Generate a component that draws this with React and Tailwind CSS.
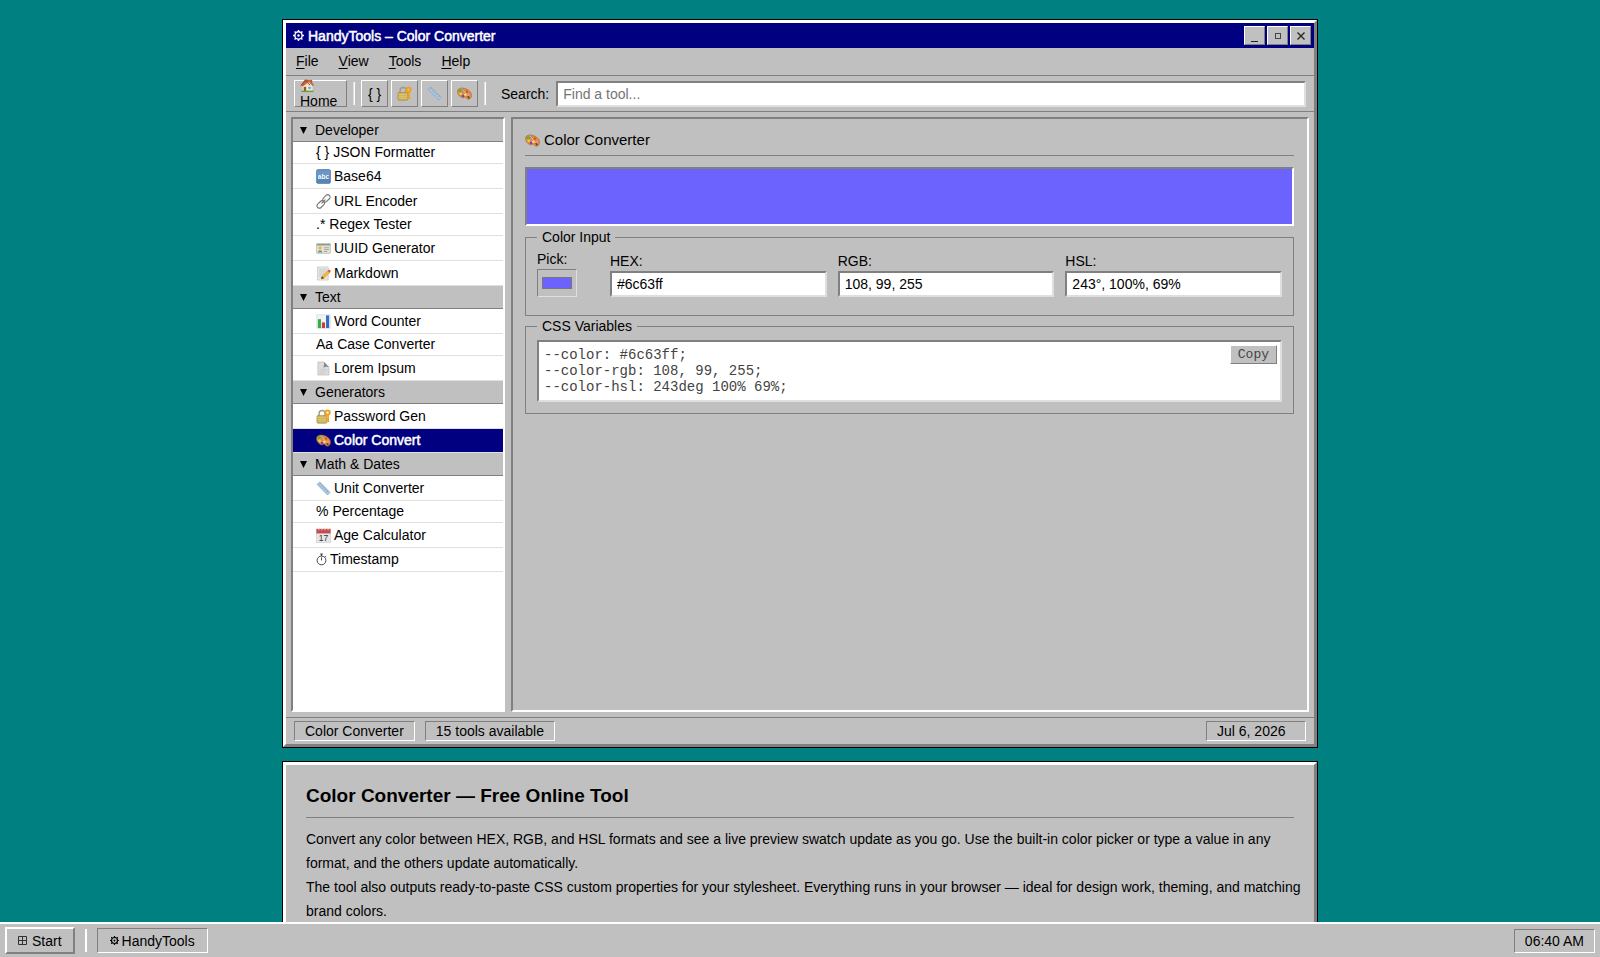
import { useState } from "react";

const Palette = ({ className = "h-[15px] w-[15px]" }) => (
    <svg viewBox="0 0 16 16" className={`shrink-0 ${className}`} aria-hidden="true">
        <path d="M.6 4.800C1.200 2.200 5 1.500 8.200 2.500c3.800 1.200 7.600 4 7.300 7.600-.2 2.400-1.700 4.200-3.700 4.100-1.600-.1-1.400-1.900-2.800-2.200-1.200-.3-1.700 1-3.200.6C2.800 11.800-.1 8.400.6 4.800z" fill="#dc8e3f" stroke="#9a5a24" strokeWidth=".5" />
        <ellipse cx="8.800" cy="9.400" rx="1.300" ry="1" fill="#f3e8da" />
        <circle cx="3.200" cy="5" r="1.400" fill="#3fb34f" />
        <circle cx="6.500" cy="4.300" r="1.300" fill="#3c8ee8" />
        <circle cx="3.900" cy="8.200" r="1.400" fill="#f5d130" />
        <circle cx="6.500" cy="10.700" r="1.300" fill="#7b3fc4" />
        <circle cx="10.500" cy="6" r="1.200" fill="#e33c3c" />
        <circle cx="12.700" cy="9.200" r="1.300" fill="#f08bb0" />
        <path d="M5.500 3 12 11.500" stroke="#f2c94c" strokeWidth="1" />
        <path d="m11.500 10.800 1.700 2.400" stroke="#6b3f1d" strokeWidth="1.500" />
    </svg>
);

const House = () => (
    <svg viewBox="0 0 16 16" className="h-[15px] w-[15px] shrink-0" aria-hidden="true">
        <path d="M11 2h2v4h-2z" fill="#a5563f" />
        <path d="M2.500 8 8 3l5.500 5v6.500h-11z" fill="#f2dfbd" />
        <path d="M1 7.800 5.500 1.500 11 2l4 5.800-1.500.8L9.500 4 3 9z" fill="#c4633f" />
        <path d="M1 8 6 2l4.500 5.500" fill="none" stroke="#8e3d28" strokeWidth="1" />
        <path d="M4 9.500h2.500v5H4z" fill="#8c5a33" />
        <path d="M8.500 9h3.500v3H8.500z" fill="#5aa7d8" stroke="#fff" strokeWidth=".6" />
        <path d="M1.500 13.500h13v1.500h-13z" fill="#6d9a45" />
    </svg>
);

const Lock = () => (
    <svg viewBox="0 0 16 16" className="h-[15px] w-[15px] shrink-0" aria-hidden="true">
        <path d="M3.300 8V4.800a3.200 3.200 0 0 1 6.400 0V8" fill="none" stroke="#9a9a94" strokeWidth="1.500" />
        <rect x="1" y="6.800" width="10.500" height="8.400" rx="1.200" fill="#cbb157" stroke="#97802f" strokeWidth=".6" />
        <path d="M1.500 9h9.500M1.500 11h9.500M1.500 13h9.500" stroke="#e6d58e" strokeWidth=".6" />
        <circle cx="12.300" cy="3.800" r="2.300" fill="none" stroke="#f0a11a" strokeWidth="2.100" />
        <path d="m12.800 6 .4 8M13 10.300h-2M13 12.800h-1.600" stroke="#f0a11a" strokeWidth="1.700" />
    </svg>
);

const Ruler = () => (
    <svg viewBox="0 0 16 16" className="h-[15px] w-[15px] shrink-0" aria-hidden="true">
        <path d="M1 3.500 4 1l11 11.200L12.300 15z" fill="#a9c6e0" stroke="#7d9cba" strokeWidth=".6" />
        <path d="m5 2.500-1.200 1M7 4.500l-1.200 1M9 6.500l-1.200 1M11 8.500l-1.200 1M13 10.500l-1.200 1" stroke="#5c7894" strokeWidth=".6" />
    </svg>
);

const Abc = () => (
    <svg viewBox="0 0 16 16" className="h-[15px] w-[15px] shrink-0" aria-hidden="true">
        <rect x=".5" y=".5" width="15" height="15" rx="1.800" fill="#5685b6" stroke="#3f6c9d" strokeWidth=".6" />
        <path d="M1 1.500h14v5H1z" fill="#7ba4cd" opacity=".6" />
        <text x="8" y="10.500" textAnchor="middle" fill="#fff" fontSize="7" fontWeight="700" fontFamily="Liberation Sans, sans-serif">abc</text>
    </svg>
);

const Link = () => (
    <svg viewBox="0 0 16 16" className="h-[15px] w-[15px] shrink-0" fill="none" stroke="#777" strokeWidth="1.200" strokeLinecap="round" aria-hidden="true">
        <rect x="6.600" y="2.200" width="9" height="5" rx="2.500" transform="rotate(-45 11.100 4.700)" />
        <rect x=".5" y="8.700" width="9" height="5" rx="2.500" transform="rotate(-45 5 11.200)" />
        <path d="m6.200 9.800 3.500-3.500" />
    </svg>
);

const IdCard = () => (
    <svg viewBox="0 0 16 16" className="h-[15px] w-[15px] shrink-0" aria-hidden="true">
        <rect x=".5" y="2.800" width="15" height="10.400" rx=".8" fill="#e4e2d4" stroke="#a9a99f" strokeWidth=".6" />
        <path d="M.8 3h14.400v1.800H.8z" fill="#8f9aa0" />
        <circle cx="4.300" cy="7.400" r="1.700" fill="#f3b81f" />
        <path d="M2 12.300c0-3.300 4.600-3.300 4.600 0z" fill="#5c9bb5" />
        <path d="M8.500 7.200h5.500M8.500 9.200h5.500M8.500 11.200h3.500" stroke="#96968c" strokeWidth=".8" />
    </svg>
);

const Memo = () => (
    <svg viewBox="0 0 16 16" className="h-[15px] w-[15px] shrink-0" aria-hidden="true">
        <path d="M1.500 1h11.500v14H1.500z" fill="#e9e9e7" stroke="#b8b8b8" strokeWidth=".6" />
        <path d="M3 3.500h8M3 5.500h8M3 7.500h7M3 9.500h5M3 11.500h3" stroke="#a5b0b8" strokeWidth=".6" />
        <path d="m5.500 13.800.9-2.900 6.300-6.100 2.200 2.200-6.300 6.100z" fill="#f4b731" stroke="#c9851c" strokeWidth=".4" />
        <path d="m12.300 5.200 1.200-1.200c.9-.6 2.500.9 2 2l-1.100 1.300z" fill="#e2574c" />
        <path d="m5.500 13.800.9-2.900 2.200 2.200z" fill="#5a3a20" />
    </svg>
);

const Chart = () => (
    <svg viewBox="0 0 16 16" className="h-[15px] w-[15px] shrink-0" aria-hidden="true">
        <path d="M.8.8h14.400v14.400H.8z" fill="#f1f3f4" stroke="#cdd2d5" strokeWidth=".6" />
        <path d="M2 5.500h3.300V15H2z" fill="#2fae4a" />
        <path d="M6.300 9h3.300v6H6.300z" fill="#d8343c" />
        <path d="M10.700 1.500H14V15h-3.300z" fill="#2f6fc9" />
    </svg>
);

const Page = () => (
    <svg viewBox="0 0 16 16" className="h-[15px] w-[15px] shrink-0" aria-hidden="true">
        <path d="M2 1h6.500l5.300 5.600V15H2z" fill="#dcdcdc" stroke="#b0b0b0" strokeWidth=".6" />
        <path d="M8.500 1c.4 2.600 0 4.300-.8 5.800 2-.7 4.200-.8 6.100-.2z" fill="#858585" />
        <path d="M4 9h7.500M4 11h7.500M4 13h5.500" stroke="#c3c3c3" strokeWidth=".7" />
    </svg>
);

const Calendar = () => (
    <svg viewBox="0 0 16 16" className="h-[15px] w-[15px] shrink-0" aria-hidden="true">
        <path d="M.5 1h15v14.500H.5z" fill="#e6e6e6" stroke="#c4c4c4" strokeWidth=".6" />
        <path d="M.5 1h15v4.800H.5z" fill="#c7494b" />
        <path d="M3 .5v2M6.300.5v2M9.600.5v2M12.900.5v2" stroke="#f1d4d4" strokeWidth="1" />
        <text x="8" y="14" textAnchor="middle" fill="#333" fontSize="9" fontFamily="Liberation Sans, sans-serif">17</text>
    </svg>
);

const Stopwatch = () => (
    <svg viewBox="0 0 12 14" className="h-[13px] w-[11px] shrink-0" fill="none" stroke="#222" strokeWidth=".9" aria-hidden="true">
        <circle cx="6" cy="8" r="4.800" />
        <path d="M4.500 1h3M6 1v2.200M9.700 3.200l1.200 1.200M6 8V4.800" />
    </svg>
);

const Gear = ({ className = "h-[11px] w-[11px]" }) => (
    <svg viewBox="0 0 12 12" className={`shrink-0 ${className}`} fill="none" stroke="currentColor" aria-hidden="true">
        <circle cx="6" cy="6" r="4" strokeWidth="1.600" />
        <circle cx="6" cy="6" r="1.300" fill="currentColor" stroke="none" />
        <path d="M6 0v2M6 10v2M0 6h2M10 6h2M1.700 1.700l1.400 1.400M8.900 8.900l1.400 1.400M1.700 10.300l1.400-1.400M8.900 3.100l1.400-1.400" strokeWidth="1.600" />
    </svg>
);

const WindowsGrid = () => (
    <svg viewBox="0 0 9 9" className="h-[9px] w-[9px] shrink-0" fill="none" stroke="#333" aria-hidden="true">
        <path d="M.5.5h8v8h-8zM4.500.5v8M.5 4.500h8" />
    </svg>
);

const groups = [
    {
        title: "Developer",
        items: [
            { prefix: "{ }", label: "JSON Formatter" },
            { icon: Abc, label: "Base64" },
            { icon: Link, label: "URL Encoder" },
            { prefix: ".*", label: "Regex Tester" },
            { icon: IdCard, label: "UUID Generator" },
            { icon: Memo, label: "Markdown" },
        ],
    },
    {
        title: "Text",
        items: [
            { icon: Chart, label: "Word Counter" },
            { prefix: "Aa", label: "Case Converter" },
            { icon: Page, label: "Lorem Ipsum" },
        ],
    },
    {
        title: "Generators",
        items: [
            { icon: Lock, label: "Password Gen" },
            { icon: Palette, label: "Color Convert", active: true },
        ],
    },
    {
        title: "Math & Dates",
        items: [
            { icon: Ruler, label: "Unit Converter" },
            { prefix: "%", label: "Percentage" },
            { icon: Calendar, label: "Age Calculator" },
            { icon: Stopwatch, label: "Timestamp", short: true },
        ],
    },
];

const raised = "border border-t-white border-l-white border-r-[#808080] border-b-[#808080]";
const sunken = "border border-t-[#808080] border-l-[#808080] border-r-white border-b-white";
const frame = "border-[3px] border-t-white border-l-white border-r-[#808080] border-b-[#808080] bg-[#c0c0c0] shadow-[0_0_0_1px_#000]";
const well = "border-2 border-t-[#808080] border-l-[#808080] border-r-white border-b-white";
const field = "h-[26px] w-full border-2 border-t-[#808080] border-l-[#808080] border-r-[#dfdfdf] border-b-[#dfdfdf] bg-white px-[5px] text-sm outline-none placeholder:text-[#757575]";

const TitleBar = () => (
    <div className="flex h-[25px] items-center justify-between bg-[#000080] pr-[3px] pl-[7px] text-white">
        <div className="flex items-center gap-1 text-sm [-webkit-text-stroke:0.5px_#fff]">
            <Gear />
            <span>HandyTools – Color Converter</span>
        </div>
        <div className="flex gap-[2px] text-[#222]">
            <button type="button" aria-label="Minimize" className={`flex h-[19px] w-[21px] items-end justify-center bg-[#c0c0c0] pb-[2px] ${raised}`}>
                <span className="h-px w-[7px] bg-[#222]" />
            </button>
            <button type="button" aria-label="Maximize" className={`flex h-[19px] w-[21px] items-center justify-center bg-[#c0c0c0] ${raised}`}>
                <span className="mt-px h-[6px] w-[6px] border border-[#444]" />
            </button>
            <button type="button" aria-label="Close" className={`flex h-[19px] w-[21px] items-center justify-center bg-[#c0c0c0] ${raised}`}>
                <svg viewBox="0 0 8 8" className="h-2 w-2" stroke="currentColor" strokeWidth="1.300">
                    <path d="m.5.5 7 7M7.500.5l-7 7" />
                </svg>
            </button>
        </div>
    </div>
);

const MenuBar = () => (
    <nav className="flex h-7 items-center gap-5 border-b border-[#808080] px-[10px] pb-px">
        {["File", "View", "Tools", "Help"].map((name) => (
            <button type="button" key={name}>
                <span className="underline underline-offset-2">{name[0]}</span>
                {name.slice(1)}
            </button>
        ))}
    </nav>
);

const Separator = () => <div className="mx-[3px] h-[23px] w-[2px] shrink-0 border-r border-l border-r-white border-l-[#dfdfdf]" />;

const ToolButton = ({ label, children }) => (
    <button type="button" aria-label={label} className={`flex h-[27px] w-[27px] shrink-0 items-center justify-center ${raised}`}>
        {children}
    </button>
);

const Toolbar = () => (
    <div className="flex h-9 items-center gap-[3px] border-b border-[#808080] px-2">
        <button type="button" className={`flex h-[27px] w-[53px] shrink-0 flex-col items-start justify-center px-[5px] ${raised}`}>
            <House />
            <span className="leading-4">Home</span>
        </button>
        <Separator />
        <ToolButton label="JSON Formatter">{"{ }"}</ToolButton>
        <ToolButton label="Password Gen"><Lock /></ToolButton>
        <ToolButton label="Unit Converter"><Ruler /></ToolButton>
        <ToolButton label="Color Convert"><Palette /></ToolButton>
        <Separator />
        <label htmlFor="search" className="pr-1 pl-[9px]">Search:</label>
        <input id="search" type="text" placeholder="Find a tool..." className={`min-w-0 flex-1 ${field}`} />
    </div>
);

const SidebarItem = ({ item }) => {
    const Icon = item.icon;
    let height = Icon ? "h-[25px]" : "h-[22px] pb-px";
    if (item.active || item.short) height = "h-6 pb-px";
    return (
        <li>
            <a
                href="#"
                className={`flex items-center border-b border-[#dfdfdf] pl-[23px] ${height} ${Icon ? "gap-[3px]" : "gap-1"} ${
                    item.active ? "bg-[#000080] text-white [-webkit-text-stroke:0.5px_#fff]" : "bg-white"
                }`}
            >
                {Icon ? <Icon /> : <span>{item.prefix}</span>}
                {item.label}
            </a>
        </li>
    );
};

const Sidebar = () => (
    <aside className={`w-[214px] shrink-0 bg-white ${well}`}>
        {groups.map((group) => (
            <section key={group.title}>
                <h2 className="flex h-[23px] items-center gap-2 border-b border-[#808080] bg-[#c0c0c0] pl-[7px]">
                    <svg viewBox="0 0 7 7" className="h-[7px] w-[7px]" aria-hidden="true">
                        <path d="M0 0h7L3.500 7z" />
                    </svg>
                    {group.title}
                </h2>
                <ul>
                    {group.items.map((item) => (
                        <SidebarItem key={item.label} item={item} />
                    ))}
                </ul>
            </section>
        ))}
    </aside>
);

const ValueField = ({ id, label, value, onChange }) => (
    <div className="flex min-w-0 flex-1 flex-col gap-[2px]">
        <label htmlFor={id} className="leading-4">{label}</label>
        <input id={id} type="text" value={value} onChange={(e) => onChange(e.target.value)} className={field} />
    </div>
);

const ColorConverter = () => {
    const [hex, setHex] = useState("#6c63ff");
    const [rgb, setRgb] = useState("108, 99, 255");
    const [hsl, setHsl] = useState("243°, 100%, 69%");

    return (
        <main className={`min-w-0 flex-1 py-3 pr-[13px] pl-3 ${well}`}>
            <h2 className="flex h-[25px] items-start gap-1 border-b border-[#808080] text-[15px] leading-[18px]">
                <Palette className="mt-[2px] h-[15px] w-[15px]" />
                Color Converter
            </h2>
            <div className={`mt-[11px] h-[59px] ${well}`} style={{ backgroundColor: hex }} />

            <fieldset className="mt-[3px] border border-[#808080] px-[11px] pt-[6px] pb-[18px]">
                <legend className="px-[5px] leading-4">Color Input</legend>
                <div className="flex items-end gap-[11px]">
                    <div className="flex w-[62px] flex-col gap-[2px]">
                        <label htmlFor="pick" className="leading-4">Pick:</label>
                        <input
                            id="pick"
                            type="color"
                            value={hex}
                            onChange={(e) => setHex(e.target.value)}
                            className="h-7 w-10 border border-t-[#808080] border-l-[#808080] border-r-[#dfdfdf] border-b-[#dfdfdf] bg-[#c0c0c0] px-1 py-[7px] [&::-webkit-color-swatch]:border-[#777] [&::-webkit-color-swatch-wrapper]:p-0"
                        />
                    </div>
                    <ValueField id="hex" label="HEX:" value={hex} onChange={setHex} />
                    <ValueField id="rgb" label="RGB:" value={rgb} onChange={setRgb} />
                    <ValueField id="hsl" label="HSL:" value={hsl} onChange={setHsl} />
                </div>
            </fieldset>

            <fieldset className="mt-[2px] border border-[#808080] px-[11px] pt-[6px] pb-[11px]">
                <legend className="px-[5px] leading-4">CSS Variables</legend>
                <div className="flex items-start justify-between border-2 border-t-[#808080] border-l-[#808080] border-r-[#dfdfdf] border-b-[#dfdfdf] bg-white py-[3px] pr-[3px] pl-[5px] font-['Liberation_Mono','Courier_New',monospace] text-[#444]">
                    <pre className="py-[2px] font-[inherit] leading-4">
                        {`--color: ${hex};\n--color-rgb: 108, 99, 255;\n--color-hsl: 243deg 100% 69%;`}
                    </pre>
                    <button type="button" className={`h-[19px] bg-[#c0c0c0] px-[7px] text-[13px] leading-4 ${raised}`}>Copy</button>
                </div>
            </fieldset>
        </main>
    );
};

const StatusBar = () => (
    <footer className="flex h-[27px] items-center gap-[10px] border-t border-[#808080] px-2">
        <div className={`h-5 px-[10px] leading-[18px] ${sunken}`}>Color Converter</div>
        <div className={`h-5 px-[10px] leading-[18px] ${sunken}`}>15 tools available</div>
        <div className={`ml-auto h-5 min-w-[100px] px-[10px] leading-[18px] ${sunken}`}>Jul 6, 2026</div>
    </footer>
);

const About = () => (
    <article className={`mt-[15px] pt-[17px] pr-1 pb-10 pl-5 ${frame}`}>
        <h1 className="mr-4 h-9 border-b border-[#808080] text-[19px] leading-[27px] font-bold">
            Color Converter — Free Online Tool
        </h1>
        <div className="mt-[9px] leading-[24px]">
            <p>
                Convert any color between HEX, RGB, and HSL formats and see a live preview swatch update as you go. Use the
                built-in color picker or type a value in any format, and the others update automatically.
            </p>
            <p>
                The tool also outputs ready-to-paste CSS custom properties for your stylesheet. Everything runs in your
                browser — ideal for design work, theming, and matching brand colors.
            </p>
        </div>
    </article>
);

const Taskbar = () => (
    <div className="flex h-[35px] shrink-0 items-center border-t-2 border-white bg-[#c0c0c0] px-[5px]">
        <button type="button" className="flex h-[27px] items-center gap-[5px] border-2 border-t-white border-l-white border-r-[#808080] border-b-[#808080] px-[11px]">
            <WindowsGrid />
            Start
        </button>
        <div className="mx-[10px] h-[23px] w-[2px] bg-white" />
        <button type="button" className={`flex h-[25px] items-center gap-[3px] px-3 ${sunken}`}>
            <Gear className="h-[9px] w-[9px]" />
            HandyTools
        </button>
        <div className={`ml-auto h-[24px] px-[10px] leading-[22px] ${sunken}`}>06:40 AM</div>
    </div>
);

export default function App() {
    return (
        <div className="flex h-screen flex-col bg-[#008080] font-['Liberation_Sans',Arial,sans-serif] text-sm text-black">
            <div className="min-h-0 flex-1 overflow-hidden px-5 pt-5">
                <div className="mx-auto max-w-[1034px]">
                    <div className={frame}>
                        <TitleBar />
                        <MenuBar />
                        <Toolbar />
                        <div className="flex min-h-[605px] gap-[6px] p-[5px]">
                            <Sidebar />
                            <ColorConverter />
                        </div>
                        <StatusBar />
                    </div>
                    <About />
                </div>
            </div>
            <Taskbar />
        </div>
    );
}
